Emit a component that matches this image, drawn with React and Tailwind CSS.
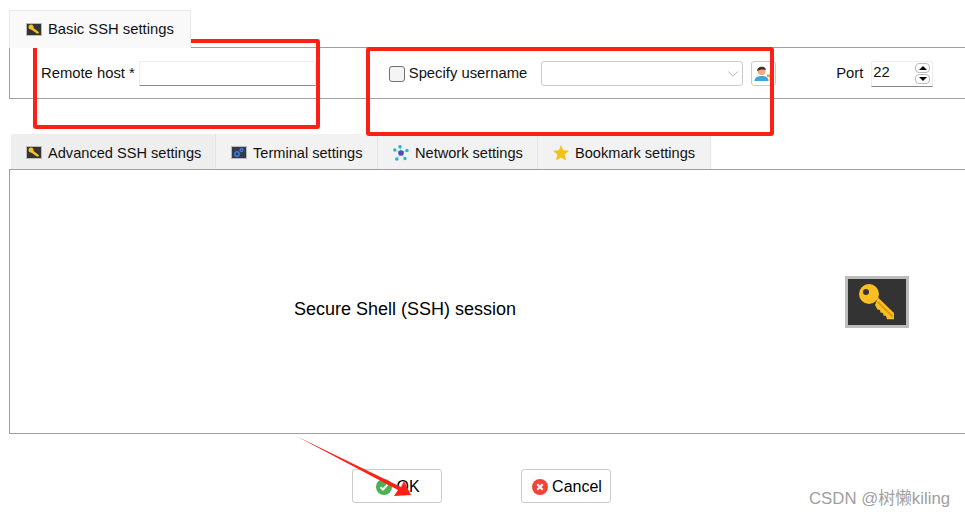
import React from 'react'
import { ChevronDown } from 'lucide-react'

function KeyBadge() {
  return (
    <svg viewBox="0 0 16 13" className="w-4 h-[13px]">
      <rect x="0.5" y="0.5" width="15" height="12" fill="#333" stroke="#bbb" />
      <circle cx="5" cy="4" r="2.5" fill="#fbbf24" />
      <path d="M6 3.8 L13 9.3 L12.5 10.6 L10.8 10.4 L4.5 6 Z" fill="#fbbf24" />
    </svg>
  )
}

function TerminalBadge() {
  return (
    <svg viewBox="0 0 16 13" className="w-4 h-[13px]">
      <rect x="0.5" y="0.5" width="15" height="12" fill="#333a4a" stroke="#bbb" />
      <circle cx="6" cy="8" r="2.2" fill="none" stroke="#3f7fd9" strokeWidth="1.5" />
      <circle cx="10.5" cy="4" r="1.5" fill="none" stroke="#3f7fd9" strokeWidth="1.3" />
    </svg>
  )
}

function NetworkIcon() {
  return (
    <svg viewBox="0 0 16 16" className="w-4 h-4">
      <path d="M8 8 L7 1.5 M8 8 L14.5 5 M8 8 L2 5 M8 8 L4 14 M8 8 L12 14" stroke="#7dd3e0" strokeWidth="0.8" />
      <circle cx="8" cy="8" r="2.8" fill="#4a4fb5" />
      <circle cx="7" cy="1.8" r="1.8" fill="#22b8cf" />
      <circle cx="14" cy="5.5" r="1.7" fill="#22b8cf" />
      <circle cx="1.8" cy="5" r="1.7" fill="#22b8cf" />
      <circle cx="3.8" cy="14" r="1.8" fill="#22b8cf" />
      <circle cx="12" cy="13.5" r="1.7" fill="#22b8cf" />
    </svg>
  )
}

function StarIcon() {
  return (
    <svg viewBox="0 0 16 16" className="w-4 h-4">
      <path d="M8 0 L10.2 5.3 L16 5.8 L11.6 9.6 L13 15.5 L8 12.4 L3 15.5 L4.4 9.6 L0 5.8 L5.8 5.3 Z" fill="#f5c211" />
    </svg>
  )
}

function UserKeyIcon() {
  return (
    <svg viewBox="0 0 20 20" className="w-5 h-5">
      <path d="M0.5 17 C0.5 13 4 12 7.5 12 C11 12 14.5 13 14.5 17 Z" fill="#3fa6d8" />
      <circle cx="7.5" cy="7" r="4" fill="#f0ac78" />
      <path d="M3.2 7 C3 1.5 12 1.5 11.8 6 C9 5 6 5.5 3.2 7 Z" fill="#3d3128" />
      <path d="M13 10.5 H20 V13 H18.5 V17 H15.5 V13 H13 Z" fill="#f59e0b" />
    </svg>
  )
}

function Tab({ icon, label, className }) {
  return (
    <div className={`flex items-center gap-[6px] h-[35px] pt-[2px] border-r border-[#e4e4e4] ${className}`}>
      {icon}
      <span className="mt-[2px] text-[14.6px]">{label}</span>
    </div>
  )
}

function App() {
  return (
    <div className="relative w-[965px] h-[517px] overflow-hidden bg-white text-[14.8px] text-[#111] font-['Liberation_Sans',Arial,sans-serif]">
      <div className="pt-[10px] pl-[9px]">
        <div className="relative z-10 flex items-center gap-[6px] w-[182px] h-[38px] pl-[16px] bg-[#f9f9f9] border border-b-0 border-[#e8e8e8]">
          <KeyBadge />
          <span>Basic SSH settings</span>
        </div>
        <div className="-mt-[1px] flex items-center h-[52px] border border-r-0 border-[#a0a0a0] pt-[1px]">
          <span className="ml-[31px]">Remote host *</span>
          <div className="ml-[4px] w-[177px] h-[25px] bg-white border border-[#eee] border-b-[#8a8a8a] rounded-t-[2px]"></div>
          <div className="ml-[73px] w-[16px] h-[16px] border border-[#707070] bg-[#f4f4f4] rounded-[3px]"></div>
          <span className="ml-[4px]">Specify username</span>
          <div className="ml-[14px] flex items-center justify-end w-[202px] h-[25px] bg-white border border-[#ccc] rounded-[3px]">
            <ChevronDown className="w-[18px] h-[18px] text-[#aaa]" strokeWidth={1.2} />
          </div>
          <div className="ml-[8px] flex items-center justify-center w-[25px] h-[25px] bg-white border border-[#ccc] rounded-[3px]">
            <UserKeyIcon />
          </div>
          <span className="ml-[60px]">Port</span>
          <div className="ml-[8px] flex items-center justify-between w-[62px] h-[26px] pl-[1px] pr-[2px] bg-white border border-[#eee] border-b-[#8a8a8a] rounded-t-[2px]">
            <span className="-mt-[2px]">22</span>
            <div className="flex flex-col gap-[1px]">
              <div className="flex items-center justify-center w-[15px] h-[10px] border border-[#bbb] rounded-[4px]">
                <div className="w-0 h-0 border-x-[4px] border-x-transparent border-b-[4px] border-b-black"></div>
              </div>
              <div className="flex items-center justify-center w-[15px] h-[10px] border border-[#bbb] rounded-[4px]">
                <div className="w-0 h-0 border-x-[4px] border-x-transparent border-t-[4px] border-t-black"></div>
              </div>
            </div>
          </div>
        </div>

        <div className="mt-[35px] ml-[2px] flex">
          <Tab icon={<KeyBadge />} label="Advanced SSH settings" className="w-[205px] pl-[15px] bg-[#eeeeee]" />
          <Tab icon={<TerminalBadge />} label="Terminal settings" className="w-[162px] pl-[15px] bg-[#f2f2f2]" />
          <Tab icon={<NetworkIcon />} label="Network settings" className="w-[160px] pl-[15px] bg-[#f2f2f2]" />
          <Tab icon={<StarIcon />} label="Bookmark settings" className="w-[173px] pl-[15px] bg-[#f2f2f2]" />
        </div>
        <div className="flex items-center h-[265px] border border-r-0 border-[#a0a0a0]">
          <span className="ml-[284px] mt-[16px] text-[18px] text-black">Secure Shell (SSH) session</span>
          <div className="ml-auto mr-[56px] flex items-center justify-center w-[64px] h-[52px] bg-[#333] border-[3px] border-[#bcbcbc]">
            <svg viewBox="0 0 40 40" className="w-[40px] h-[40px]">
              <path d="M21 15.5 L37 31 L37 37.3 L30 37.3 L29 34 L26.5 33.5 L26 31 L23.5 30.5 L23 28 L20.5 27.5 L18 23 Z" fill="#fbbf24" />
              <path d="M21 19 L36 33.5 L36 36 L20 20.5 Z" fill="#d99a0b" />
              <circle cx="12" cy="12" r="10" fill="#fbbf24" />
              <circle cx="9" cy="10" r="3" fill="#333" />
            </svg>
          </div>
        </div>

        <div className="flex mt-[35px] ml-[343px] gap-[79px]">
          <div className="flex items-center justify-center gap-[4px] w-[90px] h-[34px] pl-[2px] pt-[1px] bg-white border border-[#ccc] rounded-[3px]">
            <svg viewBox="0 0 16 16" className="w-4 h-4">
              <circle cx="8" cy="8" r="8" fill="#4caf50" />
              <path d="M4.5 8.2 L7 10.5 L11.5 5.8" fill="none" stroke="#fff" strokeWidth="2" />
            </svg>
            <span className="text-[16px] text-black">OK</span>
          </div>
          <div className="flex items-center justify-center gap-[4px] w-[90px] h-[34px] pl-[2px] pt-[1px] bg-white border border-[#ccc] rounded-[3px]">
            <svg viewBox="0 0 16 16" className="w-4 h-4">
              <circle cx="8" cy="8" r="8" fill="#f44336" />
              <path d="M5.3 5.3 L10.7 10.7 M10.7 5.3 L5.3 10.7" fill="none" stroke="#fff" strokeWidth="2" />
            </svg>
            <span className="text-[16px] text-black">Cancel</span>
          </div>
        </div>
      </div>

      {/* annotations drawn on top of the screenshot */}
      <div className="absolute left-[33px] top-[39px] w-[287px] h-[90px] border-[4px] border-[#ff1f14] rounded-[3px]"></div>
      <div className="absolute left-[366px] top-[47px] w-[408px] h-[89px] border-[4px] border-[#ff1f14] rounded-[3px]"></div>
      <svg className="absolute left-0 top-0 w-[965px] h-[517px] pointer-events-none" viewBox="0 0 965 517">
        <path d="M296 436 L401 487 L404 481 L411 495 L394 496 L398 490 Z" fill="#ff1f14" />
      </svg>
      <div className="absolute left-[809px] top-[486px] text-[16.8px] text-[#a0a0a0] font-['Liberation_Sans','Noto_Sans_CJK_SC',sans-serif]">CSDN @树懒kiling</div>
    </div>
  )
}

export default App
